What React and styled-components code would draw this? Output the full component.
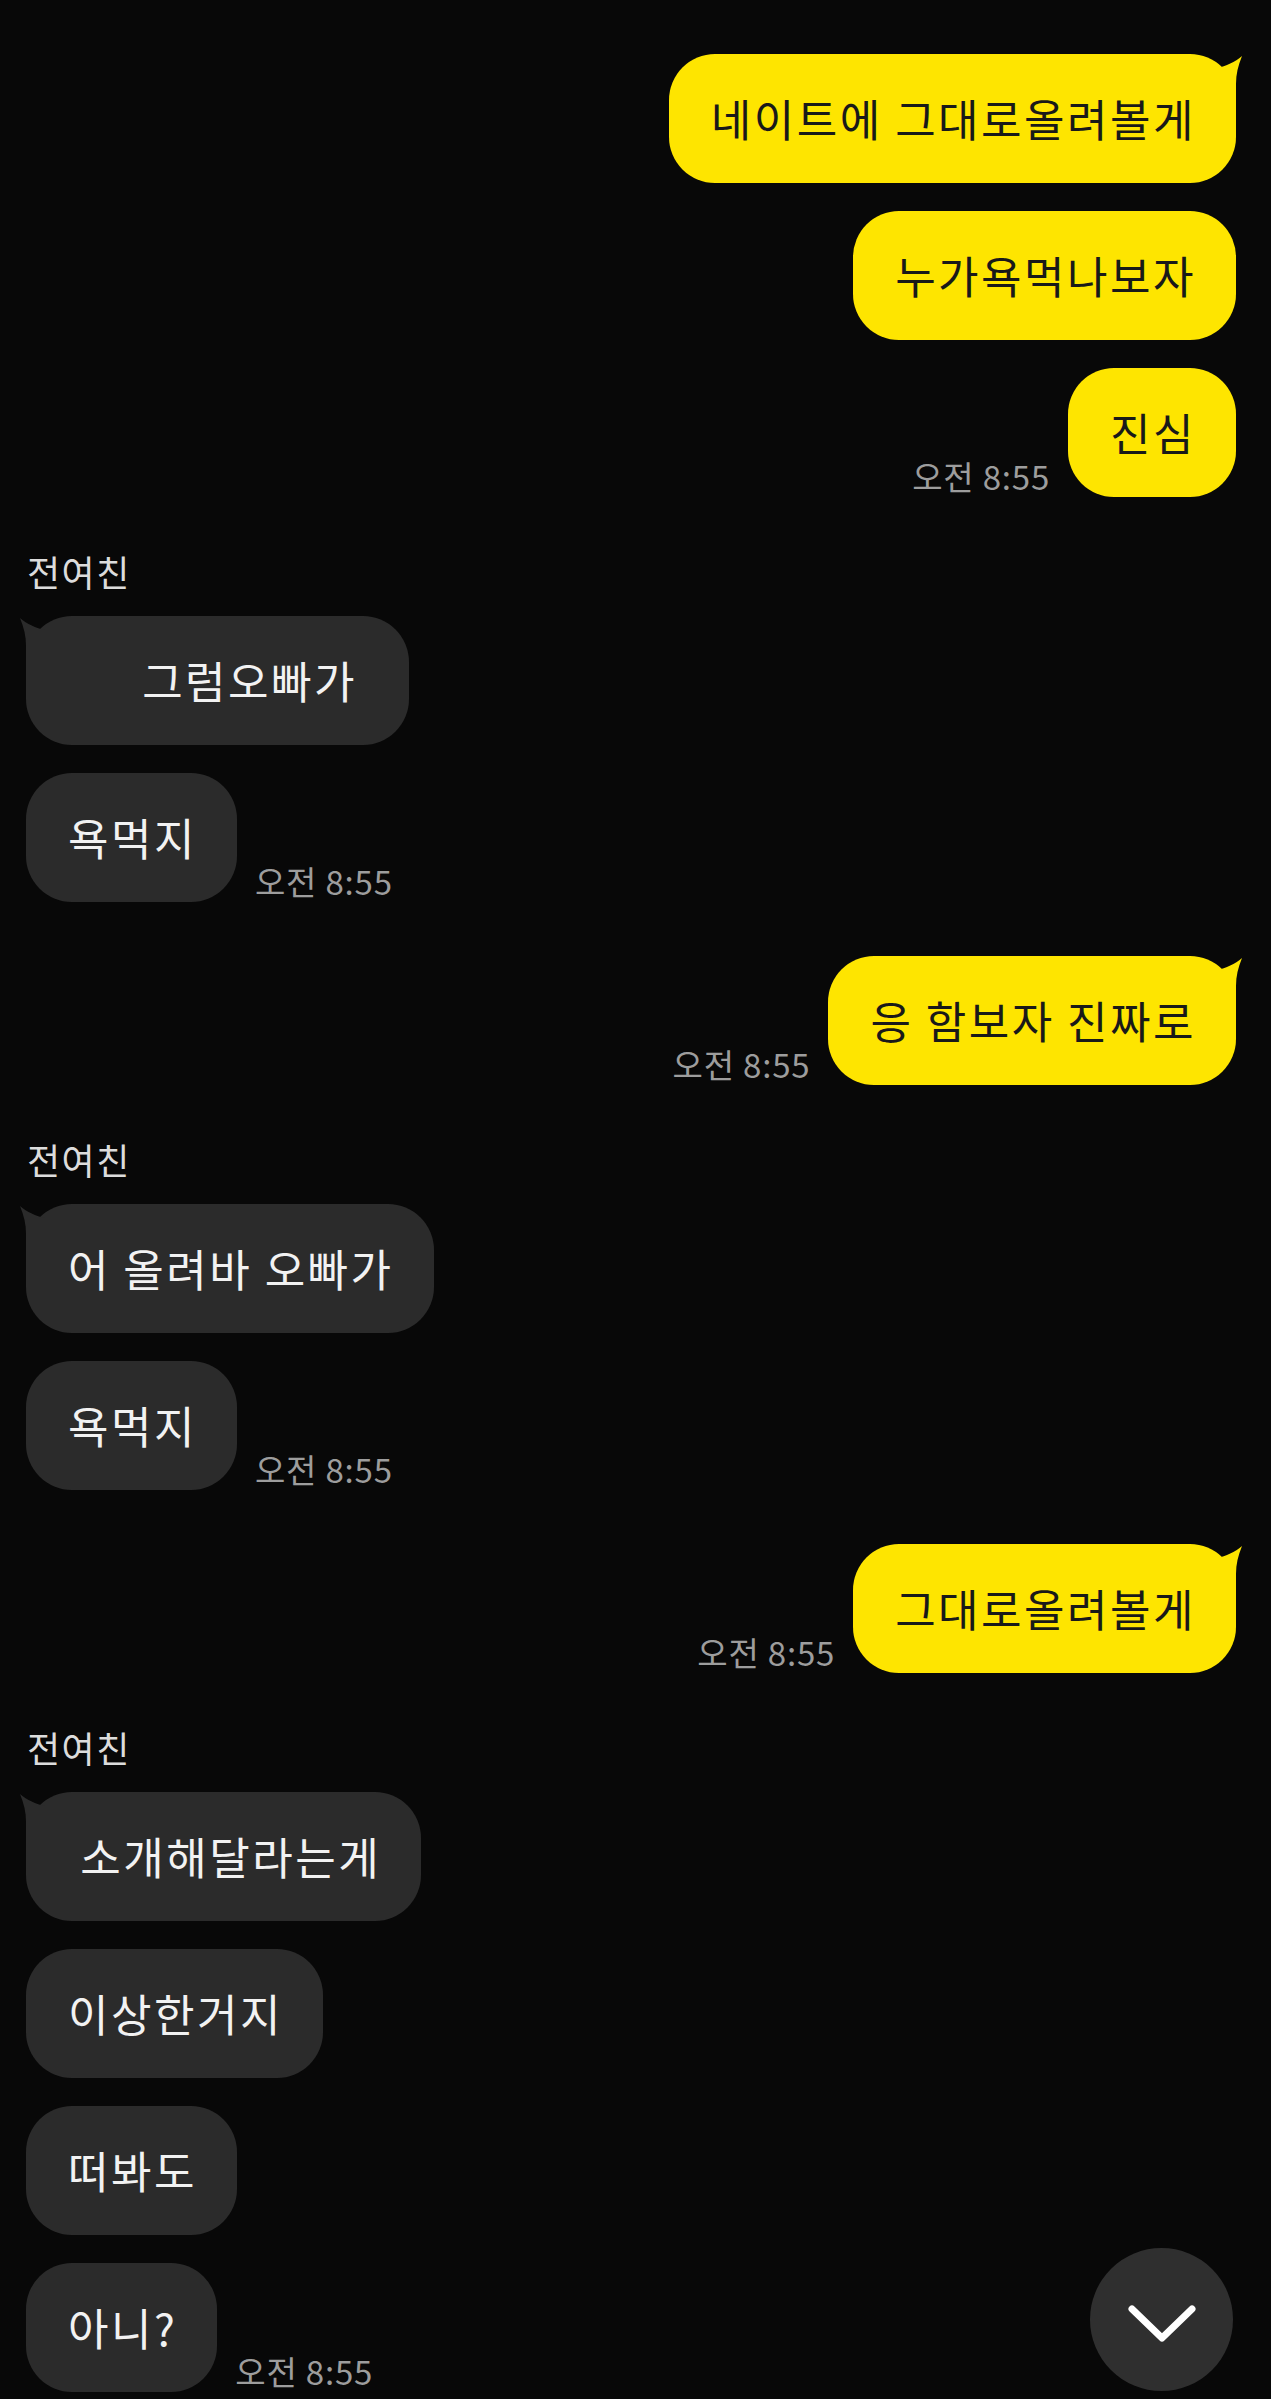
import React from "react";
import styled, { createGlobalStyle } from "styled-components";

const GlobalStyle = createGlobalStyle`
  html, body {
    margin: 0;
    padding: 0;
    background: #080808;
  }
  body {
    font-family: "Noto Sans CJK KR", "Noto Sans", sans-serif;
  }
`;

const Screen = styled.div`
  position: relative;
  box-sizing: border-box;
  width: 1271px;
  height: 2399px;
  overflow: hidden;
  background: #080808;
  padding: 54px 35px 0 26px;
  display: flex;
  flex-direction: column;
`;

const Group = styled.div`
  display: flex;
  flex-direction: column;
  align-items: ${(p) => (p.$mine ? "flex-end" : "flex-start")};
  gap: 28px;
  margin-top: ${(p) => p.$top || 0}px;
`;

const Name = styled.div`
  font-size: 36px;
  line-height: 34px;
  letter-spacing: 1.5px;
  color: #dcdcdc;
  margin-left: 1px;
`;

const Row = styled.div`
  display: flex;
  flex-direction: row;
  align-items: flex-end;
  gap: 18px;
`;

const Time = styled.span`
  font-size: 33px;
  line-height: 31px;
  letter-spacing: 0.8px;
  color: #9d9d9d;
  margin-bottom: 5px;
  white-space: nowrap;
`;

const Bubble = styled.div`
  position: relative;
  box-sizing: border-box;
  height: 129px;
  padding: 36px 40px 36px 42px;
  border-radius: 46px;
  font-size: 44px;
  line-height: 57px;
  letter-spacing: 2.5px;
  white-space: pre;
  background: ${(p) => (p.$mine ? "#fee500" : "#2b2b2b")};
  color: ${(p) => (p.$mine ? "#191919" : "#f2f2f2")};
`;

const Tail = styled.svg`
  position: absolute;
  top: 0;
  width: 40px;
  height: 50px;
  ${(p) =>
    p.$mine
      ? "right: -8px;"
      : "left: -8px; transform: scaleX(-1);"}
`;

const ScrollButton = styled.div`
  position: absolute;
  right: 38px;
  bottom: 8px;
  width: 143px;
  height: 143px;
  border-radius: 50%;
  background: #2f2f2f;
  display: flex;
  align-items: center;
  justify-content: center;
`;

function Msg({ mine, tail, children }) {
  return (
    <Bubble $mine={mine}>
      {tail && (
        <Tail $mine={mine} viewBox="0 0 40 50">
          <path
            d="M13 14 C 22 12, 31 8, 38 2 C 34 12, 32 20, 32 30 L 32 50 L 13 50 Z"
            fill={mine ? "#fee500" : "#2b2b2b"}
          />
        </Tail>
      )}
      {children}
    </Bubble>
  );
}

function MineGroup({ messages, time, top }) {
  return (
    <Group $mine $top={top}>
      {messages.map((m, i) => {
        const last = i === messages.length - 1;
        return (
          <Row key={i}>
            {last && <Time>{time}</Time>}
            <Msg mine tail={i === 0}>
              {m}
            </Msg>
          </Row>
        );
      })}
    </Group>
  );
}

function TheirGroup({ name, messages, time, top }) {
  return (
    <Group $top={top}>
      <Name>{name}</Name>
      {messages.map((m, i) => {
        const last = i === messages.length - 1;
        return (
          <Row key={i}>
            <Msg tail={i === 0}>{m}</Msg>
            {last && <Time>{time}</Time>}
          </Row>
        );
      })}
    </Group>
  );
}

export default function App() {
  return (
    <>
      <GlobalStyle />
      <Screen>
        <MineGroup
          messages={["네이트에 그대로올려볼게", "누가욕먹나보자", "진심"]}
          time="오전 8:55"
        />
        <TheirGroup
          top={57}
          name="전여친"
          messages={["      그럼오빠가 ", "욕먹지"]}
          time="오전 8:55"
        />
        <MineGroup top={54} messages={["응 함보자 진짜로"]} time="오전 8:55" />
        <TheirGroup
          top={57}
          name="전여친"
          messages={["어 올려바 오빠가", "욕먹지"]}
          time="오전 8:55"
        />
        <MineGroup top={54} messages={["그대로올려볼게"]} time="오전 8:55" />
        <TheirGroup
          top={57}
          name="전여친"
          messages={[" 소개해달라는게", "이상한거지", "떠봐도", "아니?"]}
          time="오전 8:55"
        />
        <ScrollButton>
          <svg width="143" height="143" viewBox="0 0 143 143">
            <polyline
              points="42,61 72,90 102,61"
              fill="none"
              stroke="#ffffff"
              strokeWidth="7"
              strokeLinecap="round"
              strokeLinejoin="round"
            />
          </svg>
        </ScrollButton>
      </Screen>
    </>
  );
}
